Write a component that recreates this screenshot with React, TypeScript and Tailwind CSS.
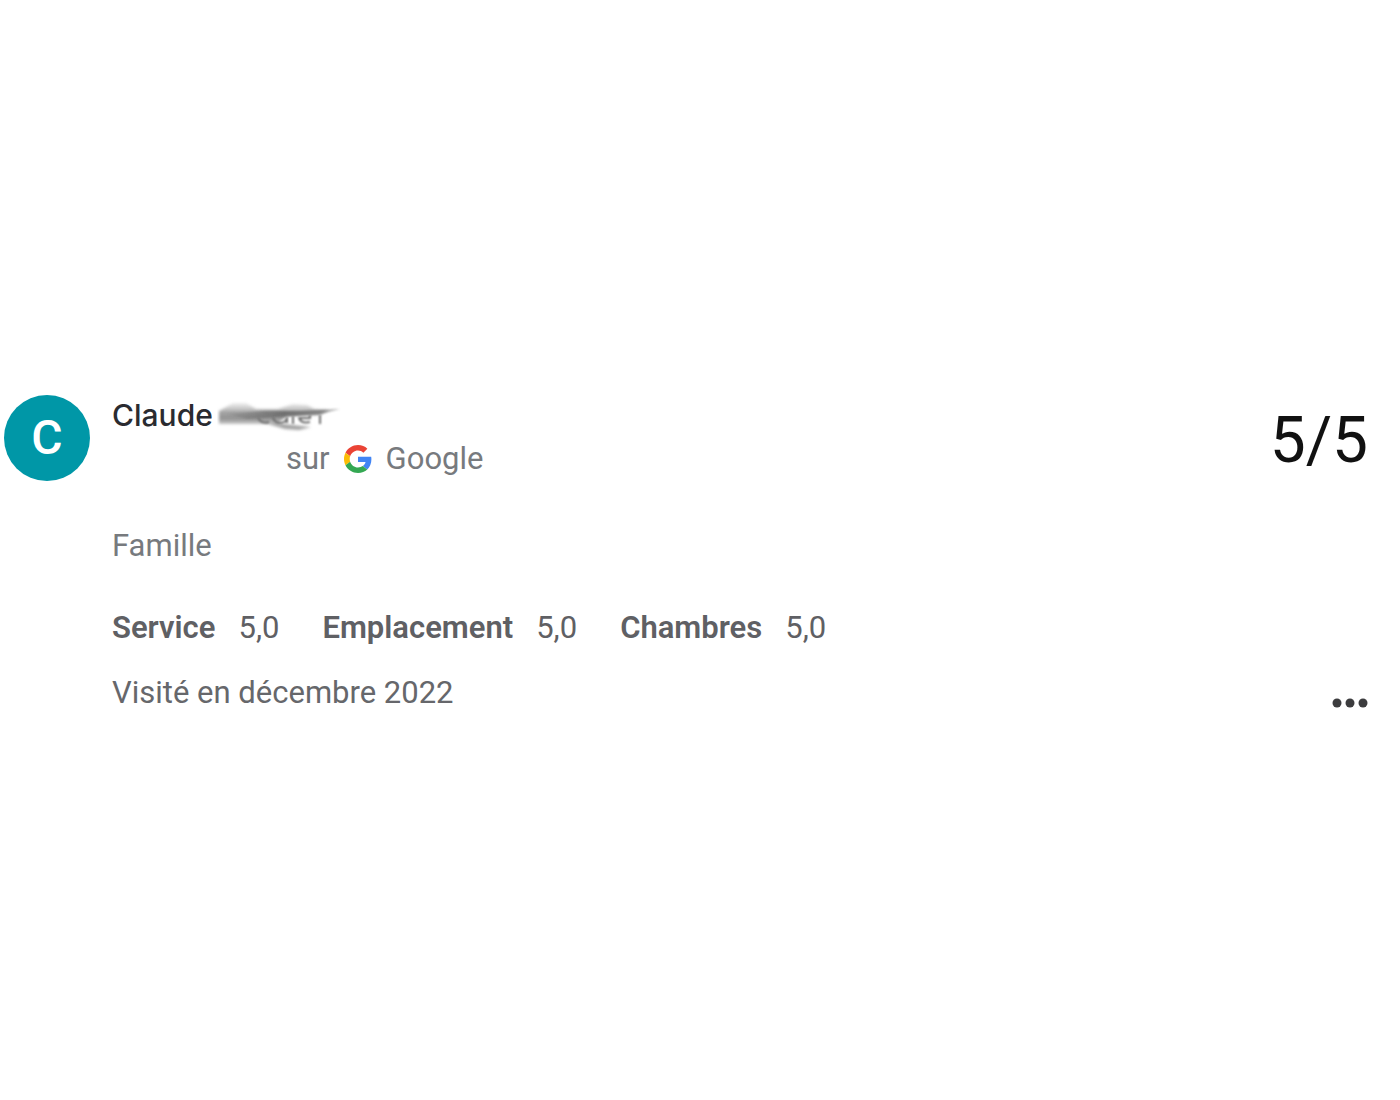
import React from 'react';

const RATINGS = [
  { label: 'Service', value: '5,0' },
  { label: 'Emplacement', value: '5,0' },
  { label: 'Chambres', value: '5,0' },
];

const GoogleLogo: React.FC = () => (
  <svg viewBox="0 0 48 48" className="h-7 w-7" aria-hidden="true">
    <path fill="#EA4335" d="M24 9.5c3.54 0 6.71 1.22 9.21 3.6l6.85-6.85C35.9 2.38 30.47 0 24 0 14.62 0 6.51 5.38 2.56 13.22l7.98 6.19C12.43 13.72 17.74 9.5 24 9.5z" />
    <path fill="#4285F4" d="M46.98 24.55c0-1.57-.15-3.09-.38-4.55H24v9.02h12.94c-.58 2.96-2.26 5.48-4.78 7.18l7.73 6c4.51-4.18 7.09-10.36 7.09-17.65z" />
    <path fill="#FBBC05" d="M10.53 28.59c-.48-1.45-.76-2.99-.76-4.59s.27-3.14.76-4.59l-7.98-6.19C.92 16.46 0 20.12 0 24c0 3.88.92 7.54 2.56 10.78l7.97-6.19z" />
    <path fill="#34A853" d="M24 48c6.48 0 11.93-2.13 15.89-5.81l-7.73-6c-2.15 1.45-4.92 2.3-8.16 2.3-6.26 0-11.57-4.22-13.47-9.91l-7.98 6.19C6.51 42.62 14.62 48 24 48z" />
  </svg>
);

// Smudge that hides the last name
const HiddenName: React.FC = () => (
  <svg viewBox="0 0 128 36" className="h-9 w-32" role="img" aria-label="Nom masqué">
    <defs>
      <linearGradient id="smudge" x1="0" y1="0" x2="0" y2="1">
        <stop offset="0" stopColor="#c8c8c8" stopOpacity="0.3" />
        <stop offset="0.45" stopColor="#a2a2a2" />
        <stop offset="0.75" stopColor="#929292" />
        <stop offset="1" stopColor="#b0b0b0" stopOpacity="0.7" />
      </linearGradient>
      <linearGradient id="streak" x1="0" y1="0" x2="1" y2="0">
        <stop offset="0" stopColor="#666" stopOpacity="0.2" />
        <stop offset="0.5" stopColor="#606060" />
        <stop offset="1" stopColor="#777" stopOpacity="0.8" />
      </linearGradient>
      <filter id="soft" x="-10%" y="-30%" width="120%" height="160%">
        <feGaussianBlur stdDeviation="1.5" />
      </filter>
      <filter id="fine" x="-10%" y="-30%" width="120%" height="160%">
        <feGaussianBlur stdDeviation="0.9" />
      </filter>
    </defs>
    <g filter="url(#soft)">
      <path d="M2 14 L16 6 L29 6 L39 12 L61 12 L76 7 L90 8 L97 12 L112 13 L103 18 L70 19 L60 27 L2 27Z" fill="url(#smudge)" />
      <path d="M48 26 L66 27 L94 30 L82 33 L68 32Z" fill="#a2a2a2" />
    </g>
    <path d="M10 17 L47 14 L84 14 L123 12 L103 17 L77 19 L30 22Z" fill="url(#streak)" opacity="0.75" filter="url(#fine)" />
    <g fill="none" stroke="#6d6d6d" strokeWidth="2" filter="url(#fine)">
      <path d="M41 21q4 6 11 4M56 20q1 6 8 6q6-1 6-6v6M76 19v8M82 20q1 7 11 5M82 21h11v-3M103 18v9" />
    </g>
  </svg>
);

const App: React.FC = () => {
  return (
    <main className="flex min-h-screen items-center bg-white pt-2 pr-8 pl-1 font-[Roboto,sans-serif]">
      <article className="flex w-full items-start gap-[22px]">
        <div className="flex h-[86px] w-[86px] shrink-0 items-center justify-center rounded-full bg-[#0097a7] text-5xl font-medium text-white">
          C
        </div>

        <div className="min-w-0 flex-1">
          <header className="flex items-start justify-between">
            <div>
              <div className="flex h-10 items-center gap-1">
                <h1 className="font-[Inter,sans-serif] text-[30px] leading-10 font-medium text-[#2a2b30]">Claude</h1>
                <HiddenName />
              </div>
              <p className="mt-1 flex h-10 items-center gap-3.5 pl-[174px] text-[31px] text-[#777a7e]">
                <span>sur</span>
                <GoogleLogo />
                <span>Google</span>
              </p>
            </div>
            <span className="pt-2 text-[64px] leading-19 text-[#111]">5/5</span>
          </header>

          <p className="mt-[47px] text-[31px] leading-10 text-[#777a7e]">Famille</p>

          <dl className="mt-[42px] flex flex-wrap gap-x-[43px] text-[31px] leading-10 text-[#5f6064]">
            {RATINGS.map((rating) => (
              <div key={rating.label} className="flex gap-[23px]">
                <dt className="font-semibold">{rating.label}</dt>
                <dd>{rating.value}</dd>
              </div>
            ))}
          </dl>

          <div className="mt-[25px] flex items-center justify-between">
            <p className="text-[31px] leading-10 text-[#66676b]">Visité en décembre 2022</p>
            <button type="button" aria-label="Plus d'options" className="pt-5">
              <svg viewBox="0 0 36 10" className="h-2.5 w-9 fill-[#3c3c3e]" aria-hidden="true">
                <circle cx="5" cy="5" r="4.5" />
                <circle cx="18" cy="5" r="4.5" />
                <circle cx="31" cy="5" r="4.5" />
              </svg>
            </button>
          </div>
        </div>
      </article>
    </main>
  );
};

export default App;
